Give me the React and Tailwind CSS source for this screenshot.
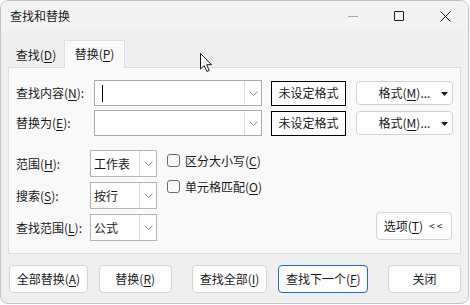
import React from "react";

const font = { fontFamily: '"Noto Sans CJK SC", "Noto Sans", sans-serif' };

function U({ children }) {
  return <span className="underline underline-offset-[2px] decoration-[1px]">{children}</span>;
}

function Chevron() {
  return (
    <svg width="9" height="5" viewBox="0 0 9 5">
      <polyline points="0.5,0.5 4.5,4.5 8.5,0.5" fill="none" stroke="#8a8a8a" strokeWidth="1" />
    </svg>
  );
}

function ComboInput({ caret }) {
  return (
    <div className="w-[168px] h-[26px] border border-[#a9a9a9] bg-white flex">
      <div className="flex-1 flex items-center pl-[7px]">
        {caret && <div className="w-[1px] h-[17px] bg-black" />}
      </div>
      <div className="w-[17px] border-l border-[#dadada] flex items-center justify-center">
        <Chevron />
      </div>
    </div>
  );
}

function Select({ value }) {
  return (
    <div className="w-[67px] h-[27px] border border-[#b5b5b5] bg-white flex">
      <div className="flex-1 flex items-center pl-[3px] text-[12px] leading-none">{value}</div>
      <div className="w-[17px] border-l border-[#d4d4d4] flex items-center justify-center">
        <Chevron />
      </div>
    </div>
  );
}

function FormatButton() {
  return (
    <div className="relative w-[97px] h-[24px] rounded-[4px] border border-[#d3d3d3] bg-[#fdfdfd] flex items-center justify-center text-[12px] leading-none">
      <span>
        格式(<U>M</U>)...
      </span>
      <svg className="absolute right-[4px] top-[10px]" width="7" height="4" viewBox="0 0 7 4">
        <polygon points="0,0 7,0 3.5,4" fill="#1a1a1a" />
      </svg>
    </div>
  );
}

function Checkbox({ children }) {
  return (
    <div className="flex items-center h-[13px]">
      <div className="w-[13px] h-[13px] rounded-[3px] border border-[#6b6b6b] bg-[#fbfbfb]" />
      <span className="ml-[5px] text-[12px] leading-none">{children}</span>
    </div>
  );
}

function Btn({ children, w, primary, className = "" }) {
  return (
    <div
      className={`h-[28px] rounded-[4px] border bg-[#fdfdfd] flex items-center justify-center text-[12px] leading-none ${
        primary ? "border-[#1a6fc4]" : "border-[#d3d3d3]"
      } ${w} ${className}`}
    >
      {children}
    </div>
  );
}

export default function App() {
  return (
    <div className="w-[470px] h-[305px] bg-white text-[#1a1a1a] relative" style={font}>
      <div className="w-[469px] h-[304px] rounded-[8px] border border-[#c4c4c4] bg-[#efefef] overflow-hidden flex flex-col">
        {/* title bar */}
        <div className="h-[30px] bg-[#f3f3f3] flex items-center">
          <span className="ml-[9px] text-[12px] leading-none">查找和替换</span>
          <div className="ml-auto flex h-full">
            <div className="w-[46px] flex items-center justify-center">
              <div className="w-[10px] h-[1px] bg-[#a8a8a8]" />
            </div>
            <div className="w-[46px] flex items-center justify-center">
              <div className="w-[10px] h-[10px] border border-[#1a1a1a] rounded-[1px]" />
            </div>
            <div className="w-[46px] flex items-center justify-center">
              <svg width="11" height="11" viewBox="0 0 11 11">
                <path d="M0.5 0.5 L10.5 10.5 M10.5 0.5 L0.5 10.5" stroke="#1a1a1a" strokeWidth="1" />
              </svg>
            </div>
          </div>
        </div>

        <div className="px-[7px] pt-[9px] flex flex-col">
          {/* tabs */}
          <div className="flex h-[27px] text-[12px] leading-none">
            <div className="w-[56px] flex items-end justify-center pb-[6px]">
              <span>
                查找(<U>D</U>)
              </span>
            </div>
            <div className="w-[61px] h-[28px] bg-[#f9f9f9] border border-b-0 border-[#dedede] flex items-center justify-center relative z-10">
              <span className="-mt-[2px]">
                替换(<U>P</U>)
              </span>
            </div>
          </div>

          {/* panel */}
          <div className="h-[187px] border border-[#dcdcdc] bg-[#f9f9f9] pl-[7px] pr-[7px] pt-[12px] flex flex-col">
            <div className="flex items-center">
              <div className="w-[78px] text-[12px] leading-none">
                查找内容(<U>N</U>):
              </div>
              <ComboInput caret />
              <div className="ml-[9px] w-[75px] h-[25px] border border-black bg-white flex items-center justify-center text-[12px] leading-none">
                未设定格式
              </div>
              <div className="ml-[10px]">
                <FormatButton />
              </div>
            </div>
            <div className="flex items-center mt-[4px]">
              <div className="w-[78px] text-[12px] leading-none">
                替换为(<U>E</U>):
              </div>
              <ComboInput />
              <div className="ml-[9px] w-[75px] h-[25px] border border-black bg-white flex items-center justify-center text-[12px] leading-none">
                未设定格式
              </div>
              <div className="ml-[10px]">
                <FormatButton />
              </div>
            </div>

            <div className="flex mt-[14px]">
              <div className="flex flex-col gap-[5px]">
                <div className="flex items-center">
                  <div className="w-[74px] text-[12px] leading-none">
                    范围(<U>H</U>):
                  </div>
                  <Select value="工作表" />
                </div>
                <div className="flex items-center">
                  <div className="w-[74px] text-[12px] leading-none">
                    搜索(<U>S</U>):
                  </div>
                  <Select value="按行" />
                </div>
                <div className="flex items-center">
                  <div className="w-[74px] text-[12px] leading-none">
                    查找范围(<U>L</U>):
                  </div>
                  <Select value="公式" />
                </div>
              </div>
              <div className="ml-[10px] pt-[4px] flex flex-col gap-[13px]">
                <Checkbox>
                  区分大小写(<U>C</U>)
                </Checkbox>
                <Checkbox>
                  单元格匹配(<U>O</U>)
                </Checkbox>
              </div>
              <div className="ml-auto self-end mb-[1px] mr-[1px]">
                <Btn w="w-[76px]">
                  <span>
                    选项(<U>T</U>)
                  </span>
                  <span className="ml-[6px] text-[10px] tracking-[2px]">&lt;&lt;</span>
                </Btn>
              </div>
            </div>
          </div>

          {/* bottom buttons */}
          <div className="flex mt-[11px]">
            <Btn w="w-[79px]" className="ml-[1px]">
              <span>
                全部替换(<U>A</U>)
              </span>
            </Btn>
            <Btn w="w-[73px]" className="ml-[11px]">
              <span>
                替换(<U>R</U>)
              </span>
            </Btn>
            <Btn w="w-[76px]" className="ml-[20px]">
              <span>
                查找全部(<U>I</U>)
              </span>
            </Btn>
            <Btn w="w-[90px]" primary className="ml-[11px]">
              <span>
                查找下一个(<U>F</U>)
              </span>
            </Btn>
            <Btn w="w-[73px]" className="ml-[20px]">
              <span>关闭</span>
            </Btn>
          </div>
        </div>
      </div>

      {/* mouse pointer */}
      <svg className="absolute left-[200px] top-[53px]" width="14" height="20" viewBox="0 0 14 20">
        <path
          d="M0.5 0.5 L0.5 16 L4.2 12.6 L6.8 18.5 L9.2 17.4 L6.6 11.7 L11.5 11.7 Z"
          fill="#ffffff"
          stroke="#1a1a1a"
          strokeWidth="1"
          strokeLinejoin="round"
        />
      </svg>
    </div>
  );
}
